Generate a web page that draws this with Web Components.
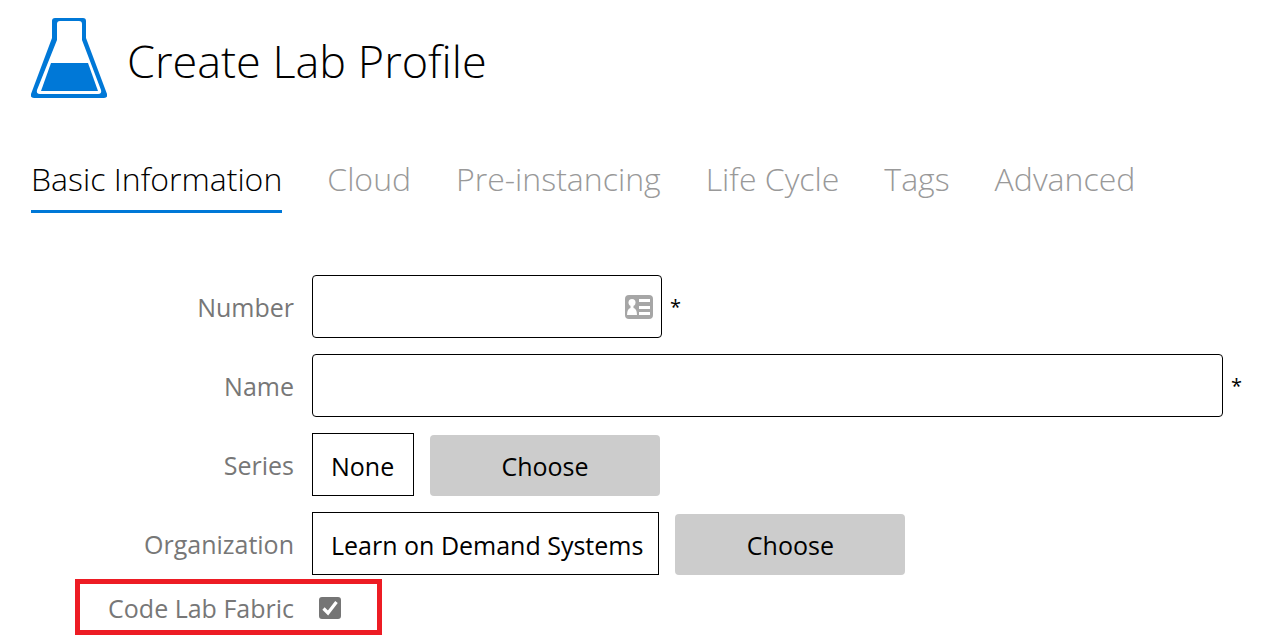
<!DOCTYPE html>
<html lang="en">
<head>
<meta charset="utf-8">
<title>Create Lab Profile</title>
<style>
  body { margin: 0; background: #fff; color: #000; font-family: "Segoe UI", "Open Sans", "Noto Sans", sans-serif; }
</style>
</head>
<body>
<lab-page>
  <lab-header slot="header">Create Lab Profile</lab-header>
  <lab-tabs slot="tabs">
    <lab-tab active>Basic Information</lab-tab>
    <lab-tab>Cloud</lab-tab>
    <lab-tab>Pre-instancing</lab-tab>
    <lab-tab>Life Cycle</lab-tab>
    <lab-tab>Tags</lab-tab>
    <lab-tab>Advanced</lab-tab>
  </lab-tabs>
  <lab-text-field label="Number" card></lab-text-field>
  <lab-text-field label="Name" wide></lab-text-field>
  <lab-picker label="Series">None</lab-picker>
  <lab-picker label="Organization">Learn on Demand Systems</lab-picker>
  <lab-check label="Code Lab Fabric"></lab-check>
</lab-page>
<script>
const define = (name, html, setup) => customElements.define(name, class extends HTMLElement {
  constructor() {
    super();
    this.attachShadow({ mode: "open" }).innerHTML = html;
  }
  connectedCallback() { if (setup) setup(this, this.shadowRoot); }
});

const rowStyle = `
  * { box-sizing: border-box; }
  :host { display: flex; align-items: center; gap: 18px; font-size: 25px; line-height: 34px; }
  .label { flex: 0 0 263px; text-align: right; color: #777; white-space: nowrap; }
  .field { flex: 1; display: flex; align-items: center; min-width: 0; }
`;
const setLabel = (host, root) => { root.querySelector(".label").textContent = host.getAttribute("label"); };

define("lab-page", `
  <style>
    :host { display: block; padding: 18px 31px 0; }
    form { display: flex; flex-direction: column; gap: 16px; margin-top: 62px; }
  </style>
  <slot name="header"></slot>
  <slot name="tabs"></slot>
  <form><slot></slot></form>`);

define("lab-header", `
  <style>
    :host { display: flex; align-items: center; gap: 20px; }
    svg { flex: none; display: block; }
    h1 { margin: 0; padding-top: 6px; font-size: 45px; line-height: 74px; font-weight: 300; }
  </style>
  <svg width="76" height="80" viewBox="0 0 76 80" aria-hidden="true">
    <path d="M24 0H52Q55 0 55 3V20L76 76Q77 80 73 80H3Q-1 80 0 76L21 20V3Q21 0 24 0Z" fill="#0078d7"/>
    <path d="M29 3H48Q51 3 51 6V22L70 72Q71 76 67 76H9Q5 76 6 72L26 22V6Q26 3 29 3Z" fill="#fff"/>
    <path d="M20 45H57L67 73H10Z" fill="#0078d7"/>
  </svg>
  <h1><slot></slot></h1>`);

define("lab-tabs", `
  <style>:host { display: flex; gap: 45px; margin-top: 58px; }</style>
  <slot></slot>`);

define("lab-tab", `
  <style>
    :host { display: block; }
    a { display: block; height: 54px; border-bottom: 3px solid transparent; color: #999; text-decoration: none; font-size: 32px; line-height: 46px; font-weight: 300; white-space: nowrap; }
    :host([active]) a { color: #000; border-color: #0078d7; }
  </style>
  <a href="#"><slot></slot></a>`);

define("lab-text-field", `
  <style>${rowStyle}
    .box { position: relative; flex: 0 0 350px; }
    :host([wide]) .box { flex: 1; }
    :host([wide]) { padding-right: 2px; }
    input { display: block; width: 100%; height: 63px; padding: 0 18px; border: 1px solid #000; border-radius: 4px; background: #fff; font: inherit; }
    svg { display: none; position: absolute; right: 9px; top: 20px; }
    :host([card]) svg { display: block; }
    .star { margin-left: 8px; font-size: 20px; line-height: 34px; }
  </style>
  <label class="label" for="input"></label>
  <div class="field">
    <div class="box"><input id="input" type="text" required>
      <svg width="28" height="24" viewBox="0 0 28 24" aria-hidden="true">
        <rect width="28" height="24" rx="4" fill="#a6a6a6"/>
        <g fill="#fff"><circle cx="7" cy="7.500" r="3.500"/><path d="M5.500 10H8.500V13Q12 14 12 20H2Q2 14 5.500 13Z"/>
        <path d="M14 4H25V7H14ZM14 11H25V14H14ZM14 17H25V20H14Z"/></g>
      </svg>
    </div>
    <span class="star">*</span>
  </div>`, setLabel);

define("lab-picker", `
  <style>${rowStyle}
    .value { min-width: 102px; height: 63px; padding: 15px 15px 15px 18px; border: 1px solid #000; white-space: nowrap; }
    button { width: 230px; height: 61px; margin: 2px 0 0 16px; padding: 0; border: 0; border-radius: 4px; background: #ccc; color: #000; font: inherit; }
  </style>
  <span class="label" id="label"></span>
  <div class="field">
    <output class="value" aria-labelledby="label"><slot></slot></output>
    <button type="button">Choose</button>
  </div>`, setLabel);

define("lab-check", `
  <style>${rowStyle}
    :host { position: relative; height: 56px; margin-top: -12px; padding-top: 2px; box-sizing: border-box; }
    .mark { position: absolute; left: 44px; top: 0; width: 307px; height: 56px; border: 5px solid #ed1c24; pointer-events: none; }
    .tick { position: relative; margin-left: 7px; width: 22px; height: 22px; }
    input { appearance: none; display: block; width: 22px; height: 22px; margin: 0; border-radius: 3px; background: #fff; border: 2px solid #757575; }
    input:checked { background: #757575; }
    svg { position: absolute; left: 0; top: 0; pointer-events: none; }
    input:not(:checked) + svg { display: none; }
  </style>
  <label class="label" for="input"></label>
  <div class="field"><div class="tick">
    <input id="input" type="checkbox" checked>
    <svg width="22" height="22" viewBox="0 0 22 22" aria-hidden="true"><path d="M4.500 11.500L9 16L17.500 5" fill="none" stroke="#fff" stroke-width="3.200"/></svg>
  </div></div>
  <div class="mark"></div>`, setLabel);
</script>
</body>
</html>
